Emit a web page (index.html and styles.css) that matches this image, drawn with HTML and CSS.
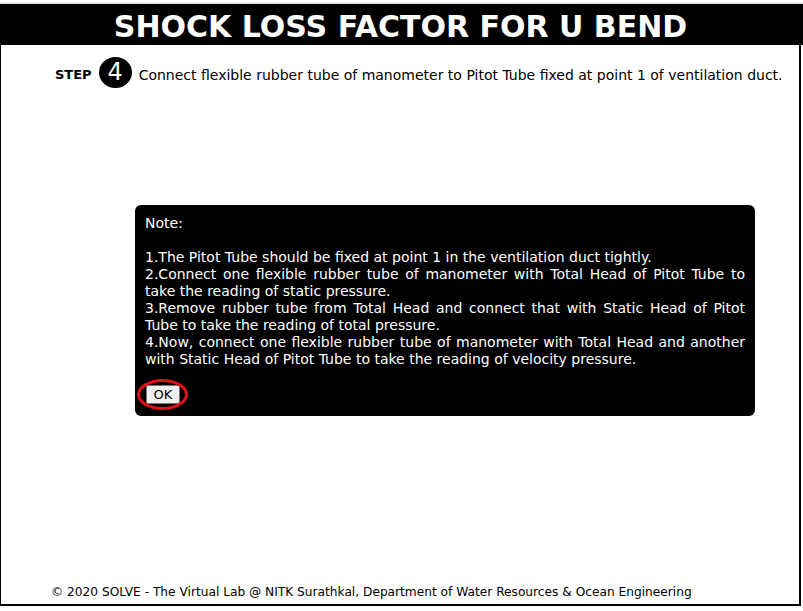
FILE: index.html
```html
<!DOCTYPE html>
<html lang="en">
<head>
<meta charset="utf-8">
<title>Shock Loss Factor for U Bend</title>
<link rel="stylesheet" href="styles.css">
</head>
<body>
<div class="topline"></div>
<header class="title-bar">SHOCK LOSS FACTOR FOR U BEND</header>
<div class="frame">
  <div class="step-row">
    <span class="step-label">STEP</span>
    <span class="step-num">4</span>
    <span class="step-text">Connect flexible rubber tube of manometer to Pitot Tube fixed at point 1 of ventilation duct.</span>
  </div>
  <div class="note">
    <p class="note-text">Note:<br><br>1.The Pitot Tube should be fixed at point 1 in the ventilation duct tightly.<br>2.Connect one flexible rubber tube of manometer with Total Head of Pitot Tube to take the reading of static pressure.<br>3.Remove rubber tube from Total Head and connect that with Static Head of Pitot Tube to take the reading of total pressure.<br>4.Now, connect one flexible rubber tube of manometer with Total Head and another with Static Head of Pitot Tube to take the reading of velocity pressure.</p>
    <div class="ok-wrap">
      <button class="ok-btn" type="button">OK</button>
      <span class="ok-ring"></span>
    </div>
  </div>
  <footer class="footer">© 2020 SOLVE - The Virtual Lab @ NITK Surathkal, Department of Water Resources &amp; Ocean Engineering</footer>
</div>
</body>
</html>
```
FILE: styles.css
```css
html, body {
  margin: 0;
  padding: 0;
  background: #fff;
}
body {
  font-family: "DejaVu Sans", Verdana, sans-serif;
  width: 803px;
  height: 611px;
  overflow: hidden;
}
.topline {
  height: 3px;
  border-bottom: 1px solid #d4d4d4;
}
.title-bar {
  background: #000;
  color: #fff;
  height: 37px;
  padding-top: 4px;
  line-height: 37px;
  font-weight: bold;
  font-size: 30px;
  text-align: center;
  width: 801px;
  padding-right: 2px;
}
.frame {
  width: 798px;
  height: 559px;
  border-left: 1px solid #000;
  border-right: 2px solid #000;
  border-bottom: 2px solid #000;
  display: flex;
  flex-direction: column;
}
.step-row {
  display: flex;
  align-items: center;
  padding-left: 54px;
  margin-top: 12px;
  height: 31px;
}
.step-label {
  font-weight: bold;
  font-size: 13px;
  color: #000;
  margin-right: 7px;
  padding-top: 4px;
}
.step-num {
  width: 33px;
  height: 31px;
  border-radius: 50%;
  background: #000;
  color: #fff;
  font-size: 24px;
  line-height: 31px;
  text-align: center;
  margin-right: 7px;
}
.step-text {
  font-size: 14px;
  color: #000;
  padding-top: 4px;
}
.note {
  margin-top: 117px;
  margin-left: 134px;
  width: 600px;
  padding: 10px 10px 12px 10px;
  background: #000;
  border-radius: 6px;
  color: #fff;
}
.note-text {
  margin: 0;
  font-size: 14px;
  line-height: 17px;
  text-align: justify;
}
.ok-wrap {
  position: relative;
  margin-top: 17px;
  width: 36px;
  height: 19px;
}
.ok-btn {
  display: block;
  width: 34px;
  height: 19px;
  margin-left: 1px;
  padding: 0;
  font-family: "DejaVu Sans", Verdana, sans-serif;
  font-size: 13px;
  color: #000;
  background: #efefef;
  border: 1px solid #767676;
  border-radius: 2px;
}
.ok-ring {
  position: absolute;
  left: -8px;
  top: -6px;
  width: 45px;
  height: 25px;
  border: 3px solid #e0101a;
  border-radius: 50%;
}
.footer {
  margin-top: auto;
  padding-left: 50px;
  padding-bottom: 4px;
  font-size: 12.2px;
  line-height: 16px;
  color: #000;
}
```
